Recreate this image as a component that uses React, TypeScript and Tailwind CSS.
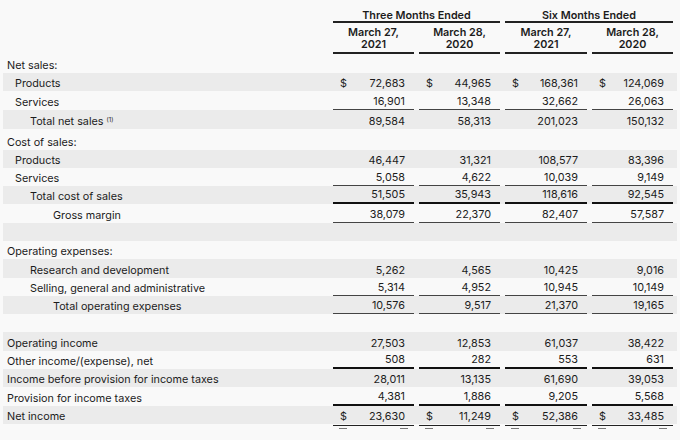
import React from 'react'

type Line = 'none' | 'thin' | 'thick'

type Row = {
  label?: string
  indent?: number
  values?: string[]
  dollar?: boolean
  line?: Line
  note?: boolean
  h?: string
}

const rows: Row[] = [
  { label: 'Net sales:', indent: 0, h: 'h-[18.5px]' },
  { label: 'Products', indent: 1, values: ['72,683', '44,965', '168,361', '124,069'], dollar: true, h: 'h-[18.5px]' },
  { label: 'Services', indent: 1, values: ['16,901', '13,348', '32,662', '26,063'], line: 'thin', h: 'h-[18.5px]' },
  { label: 'Total net sales', indent: 2, values: ['89,584', '58,313', '201,023', '150,132'], note: true, h: 'h-[19px]' },
  { label: 'Cost of sales:', indent: 0, h: 'h-[21px]' },
  { label: 'Products', indent: 1, values: ['46,447', '31,321', '108,577', '83,396'] },
  { label: 'Services', indent: 1, values: ['5,058', '4,622', '10,039', '9,149'], line: 'thin' },
  { label: 'Total cost of sales', indent: 2, values: ['51,505', '35,943', '118,616', '92,545'], line: 'thick' },
  { label: 'Gross margin', indent: 3, values: ['38,079', '22,370', '82,407', '57,587'], line: 'thin' },
  {},
  { label: 'Operating expenses:', indent: 0 },
  { label: 'Research and development', indent: 2, values: ['5,262', '4,565', '10,425', '9,016'] },
  { label: 'Selling, general and administrative', indent: 2, values: ['5,314', '4,952', '10,945', '10,149'], line: 'thin' },
  { label: 'Total operating expenses', indent: 3, values: ['10,576', '9,517', '21,370', '19,165'], line: 'thin' },
  {},
  { label: 'Operating income', indent: 0, values: ['27,503', '12,853', '61,037', '38,422'] },
  { label: 'Other income/(expense), net', indent: 0, values: ['508', '282', '553', '631'], line: 'thick' },
  { label: 'Income before provision for income taxes', indent: 0, values: ['28,011', '13,135', '61,690', '39,053'] },
  { label: 'Provision for income taxes', indent: 0, values: ['4,381', '1,886', '9,205', '5,568'], line: 'thick' },
  { label: 'Net income', indent: 0, values: ['23,630', '11,249', '52,386', '33,485'], dollar: true },
]

const indents = ['pl-[4px]', 'pl-[12px]', 'pl-[27px]', 'pl-[50px]']

const grid = 'grid grid-cols-[325px_81px_81px_82px_81px] gap-x-[5px]'

function Cell({ value, dollar, line }: { value: string; dollar?: boolean; line?: Line }) {
  const border =
    line === 'thick'
      ? 'border-b-2 border-[#111]'
      : line === 'thin'
        ? 'border-b border-[#444]'
        : ''
  return (
    <div className={`flex items-end pl-[7px] pr-[9px] ${dollar ? 'justify-between' : 'justify-end'} ${border}`}>
      {dollar && <span>$</span>}
      <span>{value}</span>
    </div>
  )
}

export default function App() {
  return (
    <div
      className="h-[440px] w-[680px] overflow-hidden bg-[#f9f9f9] px-[3px] text-[10.8px] leading-[14px] text-[#1c1c1c]"
      style={{ fontFamily: 'Inter, "Liberation Sans", sans-serif' }}
    >
      {/* Column headers */}
      <div className={`${grid} pt-[10px] font-semibold`}>
        <div />
        <div className="col-span-2 border-b-2 border-[#222] text-center leading-[11px]">
          Three Months Ended
        </div>
        <div className="col-span-2 border-b-2 border-[#222] text-center leading-[11px]">
          Six Months Ended
        </div>
      </div>
      <div className={`${grid} pt-[4px] font-semibold leading-[12px]`}>
        <div />
        {['March 27,|2021', 'March 28,|2020', 'March 27,|2021', 'March 28,|2020'].map((h, i) => (
          <div key={i} className="border-b-2 border-[#222] pb-[1px] text-center">
            {h.split('|')[0]}
            <br />
            {h.split('|')[1]}
          </div>
        ))}
      </div>

      {/* Body */}
      {rows.map((row, idx) => (
        <div
          key={idx}
          className={`${grid} ${row.h ?? 'h-[18.3px]'} ${idx % 2 === 1 ? 'bg-[#ebebeb]' : ''}`}
        >
          <div className={`flex items-end ${indents[row.indent ?? 0]}`}>
            <span>
              {row.label}
              {row.note && <sup className="ml-[3px] text-[6px]">(1)</sup>}
            </span>
          </div>
          {row.values &&
            row.values.map((v, i) => (
              <Cell key={i} value={v} dollar={row.dollar} line={row.line} />
            ))}
        </div>
      ))}

      {/* Double underline under net income */}
      <div className={`${grid} pt-[1px]`}>
        <div />
        {[0, 1, 2, 3].map((i) => (
          <div key={i}>
            <div className="h-[1px] bg-[#222]" />
            <div className="mt-[2px] flex justify-between px-[6px]">
              <div className="h-[1px] w-[8px] bg-[#777]" />
              <div className="h-[1px] w-[8px] bg-[#777]" />
            </div>
          </div>
        ))}
      </div>
    </div>
  )
}
